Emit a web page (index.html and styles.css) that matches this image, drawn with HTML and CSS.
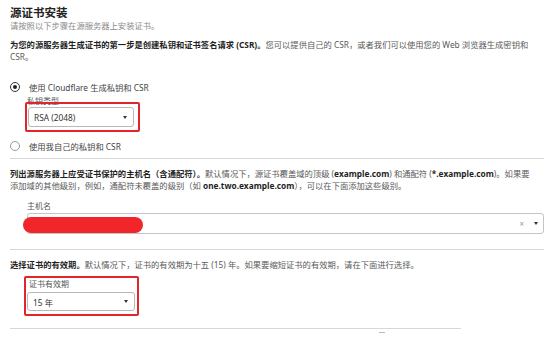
FILE: index.html
```html
<!DOCTYPE html>
<html lang="zh-CN">
  <head>
    <meta charset="UTF-8" />
    <meta name="viewport" content="width=device-width, initial-scale=1.0" />
    <title>源证书安装</title>
    <link rel="stylesheet" href="styles.css">
  </head>
  <body>
    <h1>源证书安装</h1>
    <p class="sub">请按照以下步骤在源服务器上安装证书。</p>

    <!-- 第一步：私钥和 CSR -->
    <p class="para first">
      <b>为您的源服务器生成证书的第一步是创建私钥和证书签名请求 (CSR)。</b>您可以提供自己的 CSR，或者我们可以使用您的 Web 浏览器生成密钥和<br />CSR。
    </p>

    <div class="radio-row checked-row">
      <span class="radio checked"></span>
      <span>使用 Cloudflare 生成私钥和 CSR</span>
    </div>
    <div class="field-label key-label">私钥类型</div>
    <div class="mark mark-key">
      <div class="select key-select">
        <span>RSA (2048)</span>
        <span class="caret"></span>
      </div>
    </div>
    <div class="radio-row second-row">
      <span class="radio"></span>
      <span>使用我自己的私钥和 CSR</span>
    </div>

    <hr class="rule" />

    <!-- 主机名 -->
    <p class="para">
      <b>列出源服务器上应受证书保护的主机名（含通配符）。</b>默认情况下，源证书覆盖域的顶级 (<b>example.com</b>) 和通配符 (<b>*.example.com</b>)。如果要<br />添加域的其他级别，例如，通配符未覆盖的级别（如 <b>one.two.example.com</b>），可以在下面添加这些级别。
    </p>
    <div class="field-label host-label">主机名</div>
    <div class="host-input">
      <span class="redact"></span>
      <span class="clear">×</span>
      <span class="caret"></span>
    </div>

    <hr class="rule rule-two" />

    <!-- 有效期 -->
    <p class="para">
      <b>选择证书的有效期。</b>默认情况下，证书的有效期为十五 (15) 年。如果要缩短证书的有效期，请在下面进行选择。
    </p>
    <div class="mark mark-valid">
      <div class="field-label valid-label">证书有效期</div>
      <div class="select valid-select">
        <span>15 年</span>
        <span class="caret"></span>
      </div>
    </div>

    <hr class="rule rule-short" />
    <div class="tick"></div>
  </body>
</html>
```

FILE: styles.css
```css
body {
  font-family: "Noto Sans", "Noto Sans CJK SC", sans-serif;
  font-size: 8.3px;
  color: #595959;
  background-color: #fff;
  margin: 0;
  padding: 6px 10px 0;
}
h1 {
  font-size: 11.5px;
  line-height: 14px;
  color: #222;
  margin: 0;
}
b {
  color: #1f1f1f;
}
.sub {
  margin: 0;
  line-height: 12px;
  color: #8a8a8a;
}
.para {
  margin: 9px 0 0;
  line-height: 12px;
  white-space: nowrap;
}
.first {
  margin-top: 7px;
}
.radio-row {
  display: flex;
  align-items: center;
  gap: 9px;
  height: 12px;
  color: #444;
}
.checked-row {
  margin-top: 18px;
}
.second-row {
  margin-top: 8px;
}
.radio {
  width: 8px;
  height: 8px;
  border: 1px solid #999;
  border-radius: 50%;
  display: flex;
  align-items: center;
  justify-content: center;
}
.radio.checked {
  border-color: #333;
}
.radio.checked::after {
  content: "";
  width: 4px;
  height: 4px;
  border-radius: 50%;
  background-color: #222;
}
.field-label {
  font-size: 8px;
  line-height: 10px;
  color: #555;
}
.key-label {
  margin: 3px 0 0 17px;
}
.host-label {
  margin: 9px 0 0 17px;
}
.mark {
  position: relative;
  border: 2px solid #e0262b;
  border-radius: 2px;
}
.mark-key {
  width: 106px;
  margin: -4px 0 0 15px;
  padding: 3px 4px 3px 1px;
}
.mark-valid {
  width: 108px;
  margin: 5px 0 0 14px;
  padding: 1px 2px 3px 1px;
}
.valid-label {
  margin-left: 2px;
}
.select {
  display: flex;
  align-items: center;
  justify-content: space-between;
  height: 18px;
  padding: 0 6px 0 5px;
  border: 1px solid #b8b8b8;
  border-radius: 3px;
  color: #333;
}
.valid-select {
  margin-top: 3px;
  height: 17px;
}
.caret {
  width: 0;
  height: 0;
  border-left: 2.5px solid transparent;
  border-right: 2.5px solid transparent;
  border-top: 3px solid #333;
}
.host-input {
  position: relative;
  display: flex;
  align-items: center;
  justify-content: flex-end;
  gap: 10px;
  height: 19px;
  margin: 2px 0 0 17px;
  padding: 0 5px;
  border: 1px solid #c4c4c4;
  border-radius: 3px;
}
.clear {
  color: #999;
  font-size: 8px;
}
.redact {
  position: absolute;
  left: -5px;
  top: 3px;
  width: 120px;
  height: 16px;
  border-radius: 8px;
  background-color: #f0262b;
}
.rule {
  border: 0;
  border-top: 1px solid #d8d8d8;
  margin: 6px 0 0;
}
.rule-two {
  margin-top: 15px;
}
.rule-short {
  width: 451px;
  margin: 12px 0 0;
}
.tick {
  width: 6px;
  height: 1px;
  margin: 3px 0 0 369px;
  background-color: #bbb;
}
```
